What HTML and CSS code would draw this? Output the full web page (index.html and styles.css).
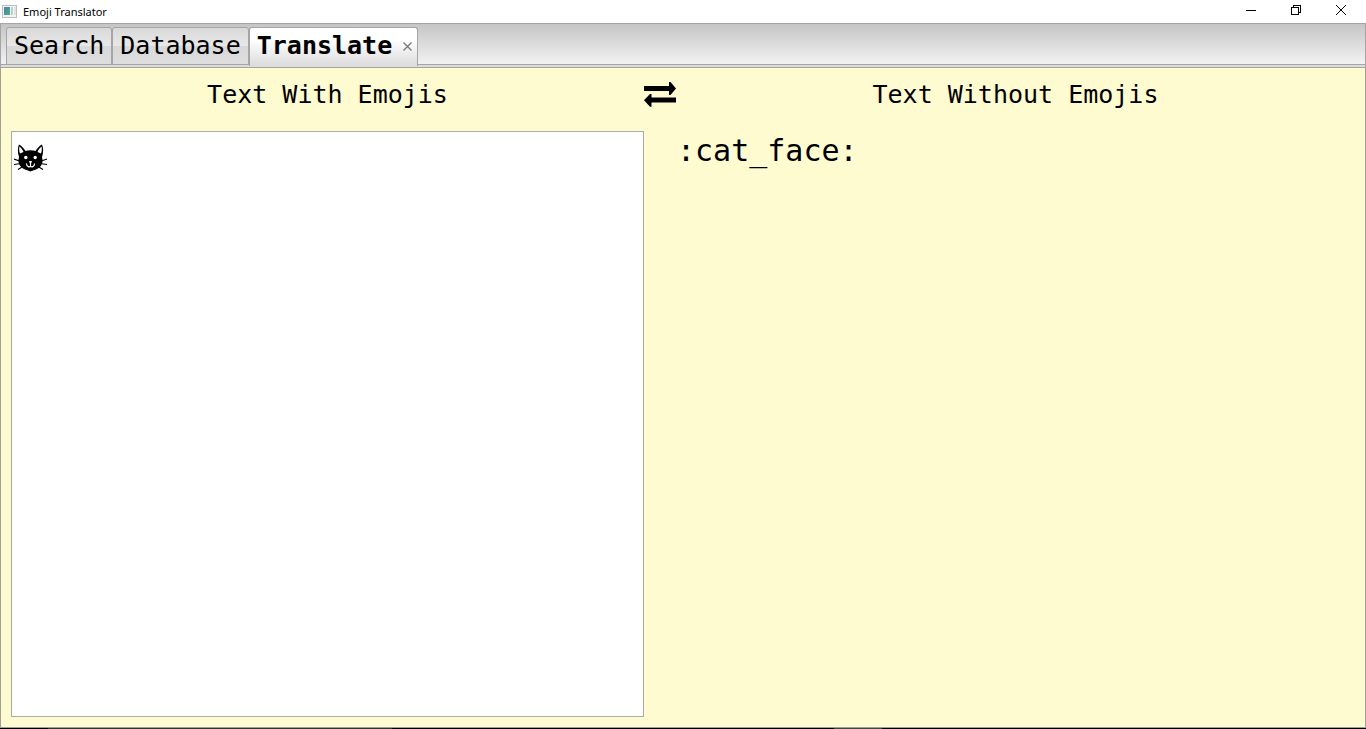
FILE: index.html
```html
<!DOCTYPE html>
<html lang="en">
<head>
<meta charset="utf-8">
<title>Emoji Translator</title>
<link rel="stylesheet" href="styles.css">
</head>
<body>
<div class="window">
  <header class="titlebar">
    <svg class="app-icon" width="16" height="14" viewBox="0 0 16 14" aria-hidden="true">
      <defs><linearGradient id="pane" x1="0" y1="0" x2="1" y2="1"><stop offset="0" stop-color="#4a7fae"/><stop offset="1" stop-color="#4fae82"/></linearGradient></defs>
      <rect x=".5" y=".5" width="14" height="12" fill="#f4f4f4" stroke="#b9bec4"/>
      <rect x="2" y="2" width="6" height="8" fill="url(#pane)"/>
      <rect x="9" y="2" width="2" height="8" fill="#b5d3cb"/>
      <rect x="12" y="2" width="2" height="8" fill="#dfe3e6"/>
    </svg>
    <h1 class="title">Emoji Translator</h1>
    <div class="window-controls">
      <button class="control" type="button" aria-label="Minimize"><svg width="10" height="10" viewBox="0 0 10 10" shape-rendering="crispEdges"><path d="M0 5.5h10" stroke="#000"/></svg></button>
      <button class="control" type="button" aria-label="Restore"><svg width="10" height="10" viewBox="0 0 10 10" shape-rendering="crispEdges" fill="none" stroke="#000"><path d="M.5 2.5h7v7h-7zM2.5 2.5v-2h7v7h-2"/></svg></button>
      <button class="control" type="button" aria-label="Close"><svg width="10" height="10" viewBox="0 0 10 10" stroke="#000"><path d="M0 0l10 10M10 0L0 10"/></svg></button>
    </div>
  </header>
  <nav class="tabs" role="tablist" aria-label="Sections">
    <button class="tab" type="button" role="tab" aria-selected="false">Search</button>
    <button class="tab" type="button" role="tab" aria-selected="false">Database</button>
    <div class="tab tab-active">
      <button class="tab-label" type="button" role="tab" aria-selected="true">Translate</button>
      <button class="tab-close" type="button" aria-label="Close tab"><svg width="9" height="9" viewBox="0 0 9 9" stroke="#777" stroke-width="1.3"><path d="M.5.5l8 8M8.5.5l-8 8"/></svg></button>
    </div>
  </nav>
  <main class="translator">
    <label class="heading" for="source">Text With Emojis</label>
    <button class="swap" type="button" aria-label="Swap directions">
      <svg width="32" height="25" viewBox="0 0 32 25"><path d="M0 4h25V0h1.500l5.500 6.500-5.500 6.500H25V9H0zM32 15.500H7.500V12H6L0 18.200l6 6.500h1.500v-4.200H32z"/></svg>
    </button>
    <label class="heading" for="result">Text Without Emojis</label>
    <div class="source-box">
      <textarea class="field source" id="source"></textarea>
      <svg class="emoji" width="34" height="28" viewBox="0 0 34 28" role="img" aria-label="cat face">
        <path d="M5 13C3.500 9 3.500 4 5 .5c3 1.500 5 4 6.500 6.500 3-1 7-1 10 0C23 4.500 25 2 28 .5c1.500 3.500 1.500 8.500 0 12.500 1.200 4 .5 7.500-2.500 10.500-2.500 2-5.500 2.500-9 4-3.500-1.500-6.500-2-9-4-3-3-3.700-6.500-2.500-10.500z"/>
        <path fill="#fff" d="M6 9.500C5 7 5 4.500 5.500 2.500c2 1.500 3 3 4 5.500zM27 9.500c1-2.500 1-5 .5-7-2 1.500-3 3-4 5.500z"/>
        <g fill="#fff"><circle cx="11.800" cy="13.500" r="1.700"/><circle cx="21.200" cy="13.500" r="1.700"/><path d="M15 17h3l-1 2.500h-1z"/></g>
        <path fill="none" stroke="#fff" stroke-width="1.200" d="M16.500 18v5M12.500 19.500c0 3.500 3.500 4 4 2.500.5 1.500 4 1 4-2.500"/>
        <path fill="none" stroke="#000" stroke-width="1.200" d="M0 15l7 2.500M0 20.500l7-1M4 25.500l5-3M33 15l-7 2.500M33 20.500l-7-1M29 25.500l-5-3"/>
      </svg>
    </div>
    <textarea class="field result" id="result" readonly>:cat_face:</textarea>
  </main>
</div>
<div class="taskbar"></div>
</body>
</html>
```
FILE: styles.css
```css
* { box-sizing: border-box; }

body {
  margin: 0;
  height: 100vh;
  display: flex;
  flex-direction: column;
  background: #fff;
  color: #000;
  font-family: "DejaVu Sans Mono", monospace;
}

button {
  padding: 0;
  border: 0;
  background: none;
  color: inherit;
  font: inherit;
}

svg { display: block; }

.window {
  flex: 1;
  min-height: 0;
  display: flex;
  flex-direction: column;
}

.titlebar {
  height: 23px;
  display: flex;
  align-items: center;
  padding: 0 3px 0 2px;
}

.title {
  flex: 1;
  margin: 0 0 0 5px;
  font: 11px "Noto Sans", sans-serif;
}

.window-controls { display: flex; }

.control {
  width: 45px;
  height: 23px;
  display: grid;
  place-items: center;
  padding-bottom: 3px;
}

.tabs {
  height: 45px;
  display: flex;
  align-items: flex-start;
  padding: 3px 5px 0;
  border: 1px solid #a5a5a5;
  background: linear-gradient(#a5a5a5, #a5a5a5) 0 40px / 100% 1px no-repeat,
    linear-gradient(#dcdcdc, #dcdcdc) 0 41px / 100% 2px no-repeat,
    linear-gradient(#c5c5c5, #f2f2f2 40px);
}

.tab {
  height: 38px;
  padding: 0 7px;
  border: 1px solid #a5a5a5;
  border-radius: 3px 3px 0 0;
  background: linear-gradient(#d9d9d9, #e8e8e8 50%, #d8d8d8 50%, #dedede);
  font-size: 25px;
  line-height: 36px;
}

.tab-active {
  height: 39px;
  display: flex;
  align-items: center;
  gap: 11px;
  padding: 0 5px 2px 7px;
  border-bottom: 0;
  background: linear-gradient(#fff, #fff 30%, #dcdcdc);
  font-weight: bold;
}

.translator {
  flex: 1;
  min-height: 0;
  display: grid;
  grid-template: 63px 1fr / 633fr 32px 679fr;
  padding: 0 10px 10px;
  border: 1px solid #a09f94;
  border-top: 0;
  background: #fffbd0;
}

.heading {
  align-self: center;
  padding-bottom: 10px;
  font-size: 25px;
  line-height: 32px;
  text-align: center;
}

.swap {
  align-self: center;
  padding-bottom: 10px;
}

.source-box { position: relative; }

.field {
  display: block;
  width: 100%;
  height: 100%;
  padding: 1px 3px;
  border: 1px solid #a9a9a9;
  outline: 0;
  resize: none;
  background: #fff;
  color: #000;
  font: 30px/36px "DejaVu Sans Mono", monospace;
}

.emoji {
  position: absolute;
  top: 13px;
  left: 3px;
}

.result {
  grid-column: 3;
  padding: 1px 0;
  border-color: transparent;
  background: transparent;
}

.taskbar {
  height: 1px;
  background: linear-gradient(90deg, #000 48px, #333 48px 392px, #000 392px 834px, #444 834px 882px, #000 882px);
}
```
